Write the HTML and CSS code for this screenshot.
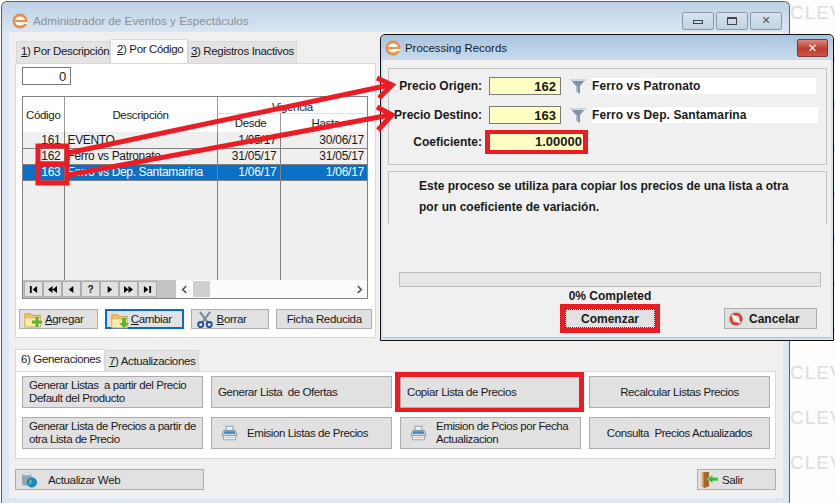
FILE: index.html
```html
<!DOCTYPE html>
<html lang="es">
<head>
<meta charset="UTF-8" />
<title>Administrador de Eventos y Espectáculos</title>
<link rel="stylesheet" href="styles.css">
</head>
<body>
<svg width="0" height="0" class="defs" aria-hidden="true">
  <symbol id="logo" viewBox="0 0 16 16">
    <circle cx="8" cy="8" r="7.500" fill="#e2924c"/>
    <ellipse cx="8" cy="8" rx="5.200" ry="4.600" fill="#fdf6ee"/>
    <path d="M1.500 7h13v2h-13z" fill="#e2924c"/>
    <path d="M11 9.200h4.500v1.800H11z" fill="#fdf6ee"/>
  </symbol>
  <symbol id="funnel" viewBox="0 0 18 18">
    <path d="M1 2h16l-6 7v8l-4-3V9z" fill="#7f95a5"/>
    <path d="M1 2h16l-2 2H3z" fill="#cfd8de"/>
    <path d="M7 9h2v7l-2-2z" fill="#a9b8c2"/>
  </symbol>
  <symbol id="folder" viewBox="0 0 22 20">
    <path d="M1 3h7l2 2h10v14H1z" fill="#efc465" stroke="#c99a42"/>
    <path d="M1 8h19v11H1z" fill="#fbe9ad" stroke="#dcb25c"/>
  </symbol>
  <symbol id="printer" viewBox="0 0 20 18">
    <path d="M6 1h8v5H6z" fill="#eef2f5" stroke="#7b8f9e"/>
    <path d="M3 6h14l2 6H1z" fill="#cbd5dc" stroke="#8496a3"/>
    <path d="M4 7h12l1 3H3z" fill="#3f8bb8"/>
    <path d="M3 12h14v5H3z" fill="#f5f6f7" stroke="#8a98a2"/>
    <path d="M5 14.500h10" stroke="#aab6bf"/>
  </symbol>
</svg>

<div class="desktop">
  <div class="window">
    <div class="titlebar">
      <svg class="logo"><use href="#logo"/></svg>
      <span class="title-text">Administrador de Eventos y Espectáculos</span>
      <div class="win-btns">
        <span class="win-btn"><i class="glyph-min"></i></span>
        <span class="win-btn"><i class="glyph-max"></i></span>
        <span class="win-btn win-x">✕</span>
      </div>
    </div>

    <div class="client">
      <div class="tabs tabs-top">
        <span class="tab tab-first"><u>1</u>) Por Descripción</span>
        <span class="tab active"><u>2</u>) Por Código</span>
        <span class="tab"><u>3</u>) Registros Inactivos</span>
      </div>
      <div class="panel panel-top">
        <div class="counter">0</div>
        <div class="grid">
          <table>
            <colgroup><col class="c1"><col class="c2"><col class="c3"><col class="c4"></colgroup>
            <thead>
              <tr class="head-a">
                <th rowspan="2">Código</th>
                <th rowspan="2" class="head-desc">Descripción</th>
                <th colspan="2" class="vigencia"><span>Vigencia</span></th>
              </tr>
              <tr class="head-b"><th>Desde</th><th>Hasta</th></tr>
            </thead>
            <tbody>
              <tr><td class="num">161</td><td>EVENTO</td><td class="num">1/05/17</td><td class="num">30/06/17</td></tr>
              <tr><td class="num">162</td><td>Ferro vs Patronato</td><td class="num">31/05/17</td><td class="num">31/05/17</td></tr>
              <tr class="selected"><td class="num">163</td><td>Ferro vs Dep. Santamarina</td><td class="num">1/06/17</td><td class="num">1/06/17</td></tr>
              <tr class="filler"><td></td><td></td><td></td><td></td></tr>
            </tbody>
          </table>
          <div class="gridbar">
            <div class="nav">
              <span class="nav-btn"><svg viewBox="0 0 10 10"><path d="M1 1h2v8H1zM9 1v8L4 5z"/></svg></span>
              <span class="nav-btn"><svg viewBox="0 0 10 10"><path d="M5 1v8L0 5zM10 1v8L5 5z"/></svg></span>
              <span class="nav-btn"><svg viewBox="0 0 10 10"><path d="M7 1v8L2 5z"/></svg></span>
              <span class="nav-btn">?</span>
              <span class="nav-btn"><svg viewBox="0 0 10 10"><path d="M3 1v8l5-4z"/></svg></span>
              <span class="nav-btn"><svg viewBox="0 0 10 10"><path d="M0 1v8l5-4zM5 1v8l5-4z"/></svg></span>
              <span class="nav-btn"><svg viewBox="0 0 10 10"><path d="M1 1v8l5-4zM7 1h2v8H7z"/></svg></span>
            </div>
            <div class="scroll">
              <svg class="chev" viewBox="0 0 8 10"><path d="M6 1L2 5l4 4" /></svg>
              <span class="thumb"></span>
              <svg class="chev chev-r" viewBox="0 0 8 10"><path d="M2 1l4 4-4 4" /></svg>
            </div>
          </div>
        </div>
        <div class="actions">
          <button class="btn btn-agregar">
            <svg class="ico"><use href="#folder"/></svg>
            <svg class="ico-badge" viewBox="0 0 10 10"><path d="M3.500 0h3v3.500H10v3H6.500V10h-3V6.500H0v-3h3.500z" fill="#5cb531"/></svg>
            <span><u>A</u>gregar</span>
          </button>
          <button class="btn btn-cambiar">
            <svg class="ico"><use href="#folder"/></svg>
            <svg class="ico-badge" viewBox="0 0 10 10"><path d="M3 0h4v5h3L5 10 0 5h3z" fill="#5cb531"/></svg>
            <span><u>C</u>ambiar</span>
          </button>
          <button class="btn btn-borrar">
            <svg class="ico" viewBox="0 0 20 20"><path d="M4 1l9 12M16 1L7 13" stroke="#7d8b96" stroke-width="2.500" fill="none"/><circle cx="5" cy="16" r="3" fill="none" stroke="#1f4f9a" stroke-width="2.200"/><circle cx="15" cy="16" r="3" fill="none" stroke="#1f4f9a" stroke-width="2.200"/></svg>
            <span><u>B</u>orrar</span>
          </button>
          <button class="btn btn-ficha">Ficha Reducida</button>
        </div>
      </div>

      <div class="tabs tabs-low">
        <span class="tab active">6) Generaciones</span>
        <span class="tab"><u>7</u>) Actualizaciones</span>
      </div>
      <div class="panel panel-low">
        <button class="btn gen left">Generar Listas&nbsp; a partir del Precio<br>Default del Producto</button>
        <button class="btn gen left">Generar Lista&nbsp; de Ofertas</button>
        <button class="btn gen left marked">Copiar Lista de Precios</button>
        <button class="btn gen">Recalcular Listas Precios</button>
        <button class="btn gen left">Generar Lista de Precios a partir de<br>otra Lista de Precio</button>
        <button class="btn gen print"><svg class="ico-print"><use href="#printer"/></svg><span>Emision Listas de Precios</span></button>
        <button class="btn gen print"><svg class="ico-print"><use href="#printer"/></svg><span>Emision de Pcios por Fecha<br>Actualizacion</span></button>
        <button class="btn gen">Consulta&nbsp; Precios Actualizados</button>
      </div>

      <div class="footer">
        <button class="btn btn-web">
          <svg class="ico-web" viewBox="0 0 18 18"><path d="M1 3c0-2 10-2 10 0v11c0 2-10 2-10 0z" fill="#9aa3ad"/><ellipse cx="6" cy="3" rx="5" ry="1.800" fill="#dfe3e7"/><circle cx="11.500" cy="12" r="5.500" fill="#1c86c8"/><path d="M9 9c2 0 3 1 3 2s-2 1-2 3l-2 1z" fill="#57c26a"/></svg>
          <span>Actualizar Web</span>
        </button>
        <button class="btn btn-salir">
          <svg class="ico-door" viewBox="0 0 20 20"><path d="M1 1h8v16l-5 2-3-2z" fill="#a8682c"/><path d="M1 1h2v16H1z" fill="#d9a468"/><path d="M7 9l6-5v3h6v4h-6v3z" fill="#3fb54a" stroke="#d9f2d9" stroke-width=".6"/></svg>
          <span>Salir</span>
        </button>
      </div>
    </div>
  </div>

  <div class="watermark">
    <span>CLEV</span><span>CLEV</span><span>CLEV</span><span>CLEV</span><span>CLEV</span><span>CLEV</span>
    <span>CLEV</span><span>CLEV</span><span>CLEV</span><span>CLEV</span><span>CLEV</span>
  </div>

  <!-- dialogo encima de la ventana -->
  <div class="dialog">
    <div class="dlg-title">
      <svg class="logo"><use href="#logo"/></svg>
      <span>Processing Records</span>
      <span class="dlg-close">✕</span>
    </div>
    <div class="dlg-body">
      <div class="group group-form">
        <div class="field">
          <label>Precio Origen:</label>
          <span class="yellow">162</span>
          <svg class="funnel"><use href="#funnel"/></svg>
          <span class="readout">Ferro vs Patronato</span>
        </div>
        <div class="field">
          <label>Precio Destino:</label>
          <span class="yellow">163</span>
          <svg class="funnel"><use href="#funnel"/></svg>
          <span class="readout readout-b">Ferro vs Dep. Santamarina</span>
        </div>
        <div class="field field-coef">
          <label>Coeficiente:</label>
          <span class="yellow coef">1.00000</span>
        </div>
      </div>
      <div class="group group-info">
        <p>Este proceso se utiliza para copiar los precios de una lista a otra</p>
        <p>por un coeficiente de variación.</p>
      </div>
      <div class="progress"></div>
      <div class="percent">0% Completed</div>
      <div class="dlg-actions">
        <button class="btn dlg-btn comenzar"><span>Comenzar</span></button>
        <button class="btn dlg-btn cancelar">
          <svg class="ico-stop" viewBox="0 0 16 16"><circle cx="8" cy="8" r="7.500" fill="#c3ccd2"/><circle cx="8" cy="8" r="6.300" fill="#dd3a30"/><circle cx="8" cy="8" r="3.600" fill="#f3d9d6"/><path d="M3.200 5L5 3.200 12.800 11 11 12.800z" fill="#fff"/></svg>
          <span>Cancelar</span>
        </button>
      </div>
    </div>
  </div>

  <!-- flechas y recuadros de la anotacion -->
  <svg class="notes" viewBox="0 0 835 503" aria-hidden="true">
    <g fill="none" stroke="#ed1c24" stroke-width="5">
      <rect x="38" y="146" width="29" height="18"/>
      <rect x="38" y="164" width="29" height="19"/>
      <path d="M68 153L390 85M377 78l15 7-13 13"/>
      <path d="M68 175L390 115M377 107l15 8-14 15"/>
    </g>
  </svg>
</div>
</body>
</html>
```

FILE: styles.css
```css
* {
  box-sizing: border-box;
}
html, body {
  margin: 0;
  padding: 0;
  width: 835px;
  height: 503px;
  overflow: hidden;
  background: #fff;
}
body {
  font-family: "Liberation Sans", Arial, sans-serif;
  font-size: 11.5px;
  letter-spacing: -.35px;
  color: #1a1a1a;
}
.defs {
  position: absolute;
}
.desktop {
  position: relative;
  display: flex;
  width: 835px;
  height: 503px;
}
button {
  font: inherit;
  color: inherit;
  letter-spacing: inherit;
}

/* Main window */
.window {
  width: 789px;
  height: 503px;
  margin-left: 1px;
  margin-top: 1px;
  display: flex;
  flex-direction: column;
  flex: none;
  border: 1px solid #5a5f66;
  border-bottom: none;
  border-radius: 6px 6px 0 0;
  background: #dbe8f4;
}
.titlebar {
  height: 30px;
  display: flex;
  align-items: center;
  padding: 7px 7px 0 10px;
  background: linear-gradient(#bdd1e6, #d9e6f3);
  border-radius: 6px 6px 0 0;
  flex: none;
}
.logo {
  width: 16px;
  height: 16px;
  flex: none;
}
.title-text {
  margin-left: 5px;
  font-size: 11.7px;
  letter-spacing: 0;
  color: #8c8f92;
}
.win-btns {
  margin-left: auto;
  display: flex;
  gap: 2px;
}
.win-btn {
  width: 32px;
  height: 18px;
  display: flex;
  align-items: center;
  justify-content: center;
  background: linear-gradient(#d7e3ef, #c3d3e3);
  border: 1px solid #8b9aa8;
  border-radius: 2px;
  color: #555;
}
.win-x {
  font-family: "DejaVu Sans", sans-serif;
  font-size: 11px;
  font-weight: bold;
}
.glyph-min {
  width: 10px;
  height: 4px;
  margin-top: 3px;
  border: 1px solid #444;
}
.glyph-max {
  width: 10px;
  height: 8px;
  border: 1px solid #444;
  border-top-width: 2px;
}
.client {
  flex: none;
  width: 774px;
  height: 466px;
  margin-left: 7px;
  padding: 7px 0 0 6px;
  background: #f0f0f0;
}

/* Tabs */
.tabs {
  display: flex;
  align-items: flex-end;
}
.tabs-top {
  height: 24px;
}
.tabs-low {
  height: 22px;
  margin-top: 11px;
}
.tab {
  height: 22px;
  padding: 3px 0 0 4px;
  background: #e3e3e3;
  border: 1px solid #d9d9d9;
  border-bottom: none;
  white-space: nowrap;
}
.tabs-top .tab:nth-child(1) { width: 94px; margin-left: 1px; }
.tabs-top .tab:nth-child(2) { width: 78px; }
.tabs-top .tab:nth-child(3) { width: 109px; padding-left: 2px; }
.tabs-low .tab:nth-child(1) { width: 90px; }
.tabs-low .tab:nth-child(2) { width: 94px; padding-left: 3px; }
.tab.active {
  background: #fff;
  height: 24px;
  padding: 3px 0 0 6px;
  position: relative;
}
.tabs-low .tab {
  height: 21px;
  padding-top: 4px;
}
.tabs-low .tab.active {
  height: 22px;
  padding-top: 3px;
  padding-left: 5px;
}
.panel {
  background: #fff;
  border: 1px solid #d9d9d9;
}
.panel-top {
  width: 361px;
  height: 275px;
  padding: 3px 3px 0;
}
.counter {
  width: 49px;
  height: 18px;
  margin-left: 3px;
  padding: 1px 4px 0 0;
  text-align: right;
  border: 1px solid #7a7a7a;
  font-size: 13px;
}

/* Data grid */
.grid {
  width: 346px;
  height: 203px;
  margin: 11px 0 0 3px;
  border: 1px solid #828282;
  background: #efefef;
  display: flex;
  flex-direction: column;
  overflow: hidden;
}
.grid table {
  flex: 1;
  width: 344px;
  height: 184px;
  border-collapse: collapse;
  table-layout: fixed;
}
.c1 { width: 41px; }
.c2 { width: 153px; }
.c3 { width: 63px; }
.c4 { width: 87px; }
.grid th {
  background: #fff;
  font-weight: normal;
  padding: 0;
  border-right: 1px solid #9a9a9a;
}
.grid th:last-child, .grid td:last-child {
  border-right: none;
}
.head-a {
  height: 16px;
}
.head-b {
  height: 19px;
}
.head-b th {
  padding-left: 4px;
  border-top: 1px solid #d5e5f3;
}
.head-desc {
  padding-left: 3px;
}
.vigencia {
  vertical-align: bottom;
}
.grid td {
  height: 16px;
  padding: 0 3px;
  border-right: 1px solid #808080;
  border-bottom: 1px solid #808080;
  font-size: 12px;
  white-space: nowrap;
  overflow: hidden;
}
.grid .num {
  text-align: right;
  letter-spacing: -.25px;
}
.grid .selected td {
  background: #0a71c6;
  color: #fff;
}
.grid .filler td {
  height: auto;
  border-bottom: none;
}
.gridbar {
  height: 18px;
  display: flex;
  flex: none;
  background: #c4c4c4;
}
.nav {
  width: 153px;
  display: flex;
  gap: 0;
  padding: 1px 0 0 1px;
}
.nav-btn {
  width: 19px;
  height: 16px;
  display: flex;
  align-items: center;
  justify-content: center;
  background: #e1e1e1;
  border: 1px solid #adadad;
  font-weight: bold;
  font-size: 10px;
}
.nav-btn svg {
  width: 9px;
  height: 9px;
}
.scroll {
  flex: 1;
  display: flex;
  align-items: center;
  background: #fbfbfb;
  padding: 0 4px 0 5px;
}
.chev {
  width: 7px;
  height: 9px;
  fill: none;
  stroke: #555;
  stroke-width: 2;
  flex: none;
}
.chev-r {
  margin-left: auto;
}
.thumb {
  width: 17px;
  height: 16px;
  margin-left: 5px;
  background: #cfcfcf;
}

/* Buttons */
.btn {
  background: #e1e1e1;
  border: 1px solid #adadad;
  padding: 0;
  cursor: pointer;
}
.actions {
  display: flex;
  gap: 7px;
  margin-top: 10px;
}
.actions .btn {
  height: 20px;
  width: 79px;
  display: flex;
  align-items: center;
  position: relative;
  padding-left: 25px;
}
.actions .btn-ficha {
  width: 96px;
  padding-left: 0;
  justify-content: center;
}
.actions .btn-cambiar {
  border: 2px solid #0a6dbc;
  padding-left: 24px;
}
.ico {
  position: absolute;
  left: 4px;
  top: 1px;
  width: 18px;
  height: 17px;
}
.ico-badge {
  position: absolute;
  left: 12px;
  top: 7px;
  width: 10px;
  height: 10px;
}
.panel-low {
  width: 761px;
  height: 88px;
  padding: 4px 0 0 6px;
  display: grid;
  grid-template-columns: repeat(4, 181px);
  grid-auto-rows: 32px;
  gap: 9px 8px;
}
.gen {
  line-height: 13px;
  letter-spacing: -.42px;
  text-align: center;
  position: relative;
}
.gen.left {
  text-align: left;
  padding-left: 6px;
}
.gen.print {
  display: flex;
  align-items: center;
  text-align: left;
  padding-left: 9px;
}
.gen.print span {
  margin-left: 9px;
}
.ico-print {
  width: 17px;
  height: 16px;
  flex: none;
}
.marked::after {
  content: "";
  position: absolute;
  inset: -5px -4px -5px -6px;
  border: 5px solid #ed1c24;
  border-width: 5px 5px 4px 5px;
}
.footer {
  display: flex;
  justify-content: space-between;
  width: 761px;
  margin-top: 10px;
}
.footer .btn {
  height: 21px;
  display: flex;
  align-items: center;
}
.btn-web {
  width: 189px;
  padding-left: 5px;
}
.btn-web span {
  margin-left: 10px;
}
.ico-web {
  width: 17px;
  height: 17px;
}
.btn-salir {
  width: 79px;
  padding-left: 3px;
}
.btn-salir span {
  margin-left: 3px;
}
.ico-door {
  width: 18px;
  height: 18px;
}

/* Right strip of the desktop */
.watermark {
  flex: 1;
  min-width: 0;
  overflow: hidden;
  display: flex;
  flex-direction: column;
  padding-top: 3px;
  background: #fdfdfd;
}
.watermark span {
  flex: none;
  height: 45px;
  line-height: 19px;
  font-size: 19px;
  letter-spacing: 1px;
  color: #dcdcdc;
  white-space: nowrap;
}

/* Dialog */
.dialog {
  position: absolute;
  left: 380px;
  top: 34px;
  width: 454px;
  height: 307px;
  border: 1px solid #111;
  border-radius: 5px 5px 0 0;
  background: #cfe3f2;
  display: flex;
  flex-direction: column;
  font-size: 12px;
  font-weight: bold;
  letter-spacing: 0;
}
.dlg-title {
  height: 25px;
  flex: none;
  display: flex;
  align-items: center;
  padding: 0 5px 0 4px;
  font-weight: normal;
  font-size: 11.4px;
  background: linear-gradient(#a9c4df, #c8dbed);
  border-radius: 5px 5px 0 0;
}
.dlg-title .logo {
  margin-right: 4px;
}
.dlg-close {
  margin-left: auto;
  width: 31px;
  height: 18px;
  display: flex;
  align-items: center;
  justify-content: center;
  font-family: "DejaVu Sans", sans-serif;
  color: #fff;
  font-weight: bold;
  background: linear-gradient(#d98a7e, #c03a2c 55%, #c9584a);
  border: 1px solid #7c3a33;
  border-radius: 2px;
}
.dlg-body {
  flex: 1;
  margin: 0 2px 2px;
  padding: 8px 6px 0 5px;
  background: #f0f0f0;
  border-bottom: 1px solid #8fd0e8;
}
.group {
  border: 1px solid #c4c4c4;
  width: 439px;
}
.group-form {
  height: 97px;
  padding-top: 8px;
}
.field {
  display: flex;
  align-items: center;
  height: 18px;
  margin-bottom: 11px;
}
.field label {
  width: 93px;
  flex: none;
  text-align: right;
  white-space: nowrap;
}
.yellow {
  width: 72px;
  height: 18px;
  margin-left: 7px;
  padding-right: 4px;
  flex: none;
  text-align: right;
  line-height: 17px;
  font-size: 13px;
  background: #ffffc4;
  border: 1px solid #7a7a7a;
}
.funnel {
  width: 18px;
  height: 18px;
  margin-left: 8px;
  flex: none;
}
.readout {
  width: 224px;
  height: 16px;
  margin-left: 5px;
  padding-top: 1px;
  background: #fff;
  letter-spacing: .1px;
}
.readout-b {
  width: 226px;
}
.field-coef {
  margin-top: -2px;
  margin-bottom: 0;
}
.yellow.coef {
  width: 103px;
  height: 24px;
  border: solid #ed1c24;
  border-width: 4px 5px;
  margin-left: 3px;
  padding-right: 1px;
  line-height: 16px;
}
.group-info {
  height: 53px;
  margin-top: 6px;
  padding: 7px 0 0 30px;
  border-bottom: none;
}
.group-info p {
  margin: 0 0 6px;
  line-height: 15px;
}
.progress {
  width: 422px;
  height: 15px;
  margin: 48px 0 0 11px;
  background: #e6e6e6;
  border: 1px solid #bcbcbc;
}
.percent {
  width: 422px;
  margin-left: 11px;
  margin-top: 1px;
  text-align: center;
  height: 14px;
  line-height: 16px;
}
.dlg-actions {
  display: flex;
  margin-top: 6px;
  padding-left: 177px;
}
.dlg-btn {
  font-weight: bold;
  display: flex;
  align-items: center;
  justify-content: center;
}
.comenzar {
  position: relative;
  width: 90px;
  height: 19px;
  margin-top: 1px;
  border: 1px dotted #0a3d7a;
  outline: 1px solid #0a6dbc;
}
.comenzar::after {
  content: "";
  position: absolute;
  inset: -6px;
  border: 5px solid #ed1c24;
}
.cancelar {
  width: 93px;
  height: 21px;
  margin-left: 69px;
  justify-content: flex-start;
  padding-left: 3px;
}
.ico-stop {
  width: 16px;
  height: 16px;
  margin-right: 5px;
}

/* Annotation layer */
.notes {
  position: absolute;
  left: 0;
  top: 0;
  width: 835px;
  height: 503px;
  pointer-events: none;
}
```
